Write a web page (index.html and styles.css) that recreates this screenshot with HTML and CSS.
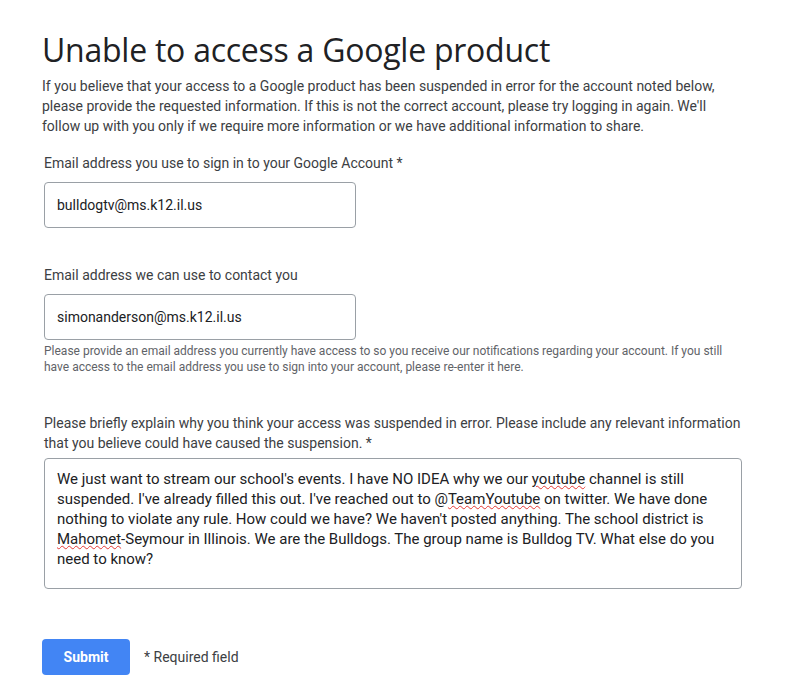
FILE: index.html
```html
<!DOCTYPE html>
<html>
<head>
<meta charset="utf-8">
<link rel="stylesheet" href="styles.css">
</head>
<body>
<div class="page">
  <h1 class="title">Unable to access a Google product</h1>
  <p class="intro">If you believe that your access to a Google product has been suspended in error for the account noted below, please provide the requested information. If this is not the correct account, please try logging in again. We'll follow up with you only if we require more information or we have additional information to share.</p>

  <div class="field field-first">
    <div class="label">Email address you use to sign in to your Google Account *</div>
    <div class="input">bulldogtv@ms.k12.il.us</div>
  </div>

  <div class="field field-second">
    <div class="label">Email address we can use to contact you</div>
    <div class="input">simonanderson@ms.k12.il.us</div>
    <div class="help">Please provide an email address you currently have access to so you receive our notifications regarding your account. If you still have access to the email address you use to sign into your account, please re-enter it here.</div>
  </div>

  <div class="field field-third">
    <div class="label">Please briefly explain why you think your access was suspended in error. Please include any relevant information that you believe could have caused the suspension. *</div>
    <div class="textarea">We just want to stream our school's events. I have NO IDEA why we our <span class="spell">youtube</span> channel is still suspended. I've already filled this out. I've reached out to @<span class="spell">TeamYoutube</span> on twitter. We have done nothing to violate any rule. How could we have? We haven't posted anything. The school district is <span class="spell">Mahomet</span>-Seymour in Illinois. We are the Bulldogs. The group name is Bulldog TV. What else do you need to know?</div>
  </div>

  <div class="actions">
    <div class="submit">Submit</div>
    <div class="required">* Required field</div>
  </div>
</div>
</body>
</html>
```
FILE: styles.css
```css
html, body {
  margin: 0;
  padding: 0;
  background: #ffffff;
}
body {
  font-family: Roboto, "Liberation Sans", Arial, sans-serif;
  color: #202124;
}
.page {
  padding: 30px 0 0 42px;
  width: 700px;
}
.title {
  margin: 0;
  font-family: "Open Sans", Roboto, sans-serif;
  font-weight: 400;
  font-size: 32px;
  line-height: 40px;
  color: #202124;
  letter-spacing: -0.25px;
}
.intro {
  margin: 6px 0 0 0;
  font-size: 14px;
  line-height: 20px;
  color: #3c4043;
  width: 690px;
}
.field {
  margin-left: 2px;
}
.field-first {
  margin-top: 17px;
}
.field-second {
  margin-top: 37px;
}
.field-third {
  margin-top: 38px;
}
.label {
  font-size: 14px;
  line-height: 20px;
  color: #3c4043;
  width: 700px;
}
.input {
  margin-top: 9px;
  box-sizing: border-box;
  width: 312px;
  height: 46px;
  border: 1px solid #9aa0a6;
  border-radius: 4px;
  padding: 0 12px;
  display: flex;
  align-items: center;
  font-size: 14px;
  color: #202124;
}
.help {
  margin-top: 3px;
  font-size: 12px;
  line-height: 16px;
  color: #5f6368;
  width: 690px;
}
.textarea {
  margin-top: 5px;
  box-sizing: border-box;
  width: 698px;
  height: 131px;
  border: 1px solid #9aa0a6;
  border-radius: 4px;
  padding: 10px 12px;
  font-size: 15px;
  line-height: 20px;
  color: #202124;
}
.spell {
  text-decoration: underline wavy #e53935;
  text-decoration-thickness: 1px;
  text-underline-offset: 1px;
}
.actions {
  margin-top: 50px;
  display: flex;
  align-items: center;
  gap: 14px;
}
.submit {
  width: 88px;
  height: 36px;
  background: #4285f4;
  border-radius: 4px;
  color: #ffffff;
  font-weight: 700;
  font-size: 14px;
  display: flex;
  align-items: center;
  justify-content: center;
}
.required {
  font-size: 14px;
  color: #3c4043;
}
```
